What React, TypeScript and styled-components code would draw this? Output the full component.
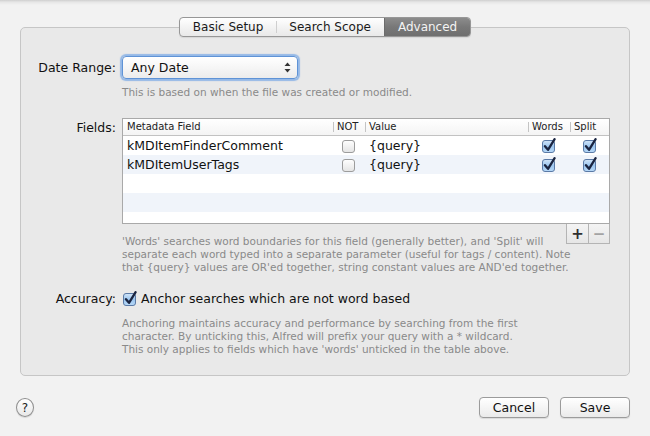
import React from 'react'
import styled, { createGlobalStyle } from 'styled-components'

const Global = createGlobalStyle`
  html, body {
    margin: 0;
    padding: 0;
    background: #f2f2f2;
  }
  body {
    font-family: "DejaVu Sans", "Liberation Sans", sans-serif;
    color: #111;
  }
`

const Window = styled.div`
  width: 650px;
  height: 436px;
  box-sizing: border-box;
  padding: 17px 20px 0 20px;
  display: flex;
  flex-direction: column;
  background: linear-gradient(#cfcfcf 0px, #e6e6e6 2px, #f2f2f2 5px, #f2f2f2 100%);
  overflow: hidden;
`

const TabBar = styled.div`
  display: flex;
  justify-content: center;
  position: relative;
  z-index: 1;
`

const Segments = styled.div`
  display: flex;
  height: 20px;
  box-sizing: border-box;
  border: 1px solid #979797;
  border-radius: 4px;
  overflow: hidden;
  background: linear-gradient(#ffffff, #f1f1f1 60%, #e9e9e9);
  box-shadow: 0 1px 1px rgba(0, 0, 0, 0.08);
`

const Tab = styled.div<{ $active?: boolean; $divider?: boolean }>`
  display: flex;
  align-items: center;
  justify-content: center;
  padding: 0 13px;
  font-size: 12px;
  color: ${p => (p.$active ? '#f4f4f4' : '#1a1a1a')};
  background: ${p =>
    p.$active
      ? 'linear-gradient(#8c8c8c, #787878 50%, #6f6f6f)'
      : p.$divider
      ? 'linear-gradient(#cfcfcf, #cfcfcf) left center / 1px 12px no-repeat'
      : 'transparent'};
  border-left: ${p => (p.$active ? '1px solid #6c6c6c' : 'none')};
`

const GroupBox = styled.div`
  margin-top: -10px;
  height: 349px;
  box-sizing: border-box;
  border: 1px solid #c6c6c6;
  border-radius: 5px;
  background: #e9e9e9;
  padding: 28px 19px 0 0;
`

const FieldRow = styled.div<{ $gap?: number }>`
  display: grid;
  grid-template-columns: 95px 1fr;
  column-gap: 6px;
  margin-top: ${p => p.$gap ?? 0}px;
`

const Label = styled.div<{ $pad?: number }>`
  text-align: right;
  font-size: 12.5px;
  line-height: 16px;
  padding-top: ${p => p.$pad ?? 0}px;
`

const Popup = styled.div`
  width: 176px;
  height: 23px;
  box-sizing: border-box;
  display: flex;
  align-items: center;
  justify-content: space-between;
  padding: 0 6px 0 8px;
  font-size: 12.5px;
  border: 1px solid #5f93d6;
  border-radius: 4px;
  background: linear-gradient(#ffffff, #f6f6f6 50%, #ececec);
  box-shadow: 0 0 1px 2px rgba(120, 168, 230, 0.75);
`

const Hint = styled.div<{ $gap?: number }>`
  font-size: 10.5px;
  line-height: 13px;
  color: #8a8a8a;
  margin-top: ${p => p.$gap ?? 0}px;
  white-space: nowrap;
`

const Table = styled.div`
  width: 488px;
  box-sizing: border-box;
  border: 1px solid #a9a9a9;
  background: #fff;
`

const Cols = styled.div`
  display: grid;
  grid-template-columns: 210px 32px 1fr 42px 39px;
`

const HeaderRow = styled(Cols)`
  height: 16px;
  border-bottom: 1px solid #c2c2c2;
  background: linear-gradient(#ffffff, #f4f4f4);
`

const HeadCell = styled.div<{ $sep?: boolean }>`
  font-size: 10px;
  line-height: 16px;
  color: #222;
  padding-left: 4px;
  background: ${p =>
    p.$sep ? 'linear-gradient(#c4c4c4, #c4c4c4) left center / 1px 10px no-repeat' : 'none'};
  white-space: nowrap;
  overflow: hidden;
`

const Body = styled.div`
  height: 87px;
  overflow: hidden;
`

const DataRow = styled(Cols)<{ $alt?: boolean }>`
  height: 19px;
  align-items: center;
  background: ${p => (p.$alt ? '#f0f4fa' : '#ffffff')};
`

const Cell = styled.div<{ $center?: boolean }>`
  font-size: 12.5px;
  line-height: 19px;
  padding-left: ${p => (p.$center ? 0 : 4)}px;
  display: flex;
  align-items: center;
  justify-content: ${p => (p.$center ? 'center' : 'flex-start')};
  white-space: nowrap;
`

const Below = styled.div`
  display: grid;
  grid-template-columns: 1fr auto;
  width: 488px;
`

const Note = styled(Hint)`
  grid-area: 1 / 1 / 2 / 3;
  padding-top: 11px;
`

const PlusMinus = styled.div`
  grid-area: 1 / 2 / 2 / 3;
  align-self: start;
  display: flex;
  height: 20px;
  box-sizing: border-box;
  border: 1px solid #b4b4b4;
  border-top: none;
  background: linear-gradient(#f4f4f4, #e6e6e6);
`

const PMButton = styled.div<{ $disabled?: boolean }>`
  width: 21px;
  display: flex;
  align-items: center;
  justify-content: center;
  font-size: 15px;
  font-weight: bold;
  color: ${p => (p.$disabled ? '#a3a3a3' : '#2f2f2f')};
  & + & {
    border-left: 1px solid #b4b4b4;
    width: 20px;
  }
`

const CheckLine = styled.div`
  display: flex;
  align-items: center;
  gap: 3px;
  font-size: 12.5px;
  line-height: 16px;
`

const BottomBar = styled.div`
  display: flex;
  align-items: center;
  margin-top: 21px;
  margin-left: -4px;
  height: 21px;
`

const HelpButton = styled.div`
  width: 18px;
  height: 19px;
  box-sizing: border-box;
  border-radius: 50%;
  border: 1px solid #8e8e8e;
  background: linear-gradient(#ffffff, #e8e8e8);
  box-shadow: 0 1px 1px rgba(0, 0, 0, 0.12);
  display: flex;
  align-items: center;
  justify-content: center;
  font-size: 12px;
  color: #222;
`

const Spacer = styled.div`
  flex: 1;
`

const PushButton = styled.div`
  width: 70px;
  height: 21px;
  box-sizing: border-box;
  border: 1px solid #9b9b9b;
  border-radius: 4px;
  background: linear-gradient(#ffffff, #f5f5f5 50%, #eaeaea);
  box-shadow: 0 1px 1px rgba(0, 0, 0, 0.1);
  display: flex;
  align-items: center;
  justify-content: center;
  font-size: 12.5px;
  margin-left: 11px;
`

function Checkbox({ checked }: { checked?: boolean }) {
  return (
    <svg width="16" height="16" viewBox="0 0 16 16">
      <defs>
        <linearGradient id="cbOn" x1="0" y1="0" x2="0" y2="1">
          <stop offset="0" stopColor="#d2e5f8" />
          <stop offset="0.5" stopColor="#9cc6ef" />
          <stop offset="1" stopColor="#b7d8f7" />
        </linearGradient>
        <linearGradient id="cbOff" x1="0" y1="0" x2="0" y2="1">
          <stop offset="0" stopColor="#ffffff" />
          <stop offset="1" stopColor="#e4e4e4" />
        </linearGradient>
      </defs>
      <rect
        x="1.5"
        y="2.5"
        width="12"
        height="12"
        rx="2.5"
        fill={checked ? 'url(#cbOn)' : 'url(#cbOff)'}
        stroke={checked ? '#5b7aa6' : '#9c9c9c'}
      />
      {checked && (
        <path
          d="M4 8.2 L7 11.8 L13.6 1.2"
          fill="none"
          stroke="#1a2440"
          strokeWidth="2.3"
          strokeLinecap="round"
          strokeLinejoin="round"
        />
      )}
    </svg>
  )
}

function Stepper() {
  return (
    <svg width="7" height="11" viewBox="0 0 7 11">
      <path d="M3.5 0.5 L6.5 4 L0.5 4 Z" fill="#333" />
      <path d="M3.5 10.5 L6.5 7 L0.5 7 Z" fill="#333" />
    </svg>
  )
}

const fields = [
  { name: 'kMDItemFinderComment', not: false, value: '{query}', words: true, split: true },
  { name: 'kMDItemUserTags', not: false, value: '{query}', words: true, split: true },
]

function App() {
  const rows = [...fields, null, null, null]
  return (
    <Window>
      <Global />
      <TabBar>
        <Segments>
          <Tab>Basic Setup</Tab>
          <Tab $divider>Search Scope</Tab>
          <Tab $active>Advanced</Tab>
        </Segments>
      </TabBar>

      <GroupBox>
        <FieldRow>
          <Label $pad={4}>Date Range:</Label>
          <div>
            <Popup>
              <span>Any Date</span>
              <Stepper />
            </Popup>
            <Hint $gap={7}>This is based on when the file was created or modified.</Hint>
          </div>
        </FieldRow>

        <FieldRow $gap={19}>
          <Label $pad={2}>Fields:</Label>
          <div>
            <Table>
              <HeaderRow>
                <HeadCell>Metadata Field</HeadCell>
                <HeadCell $sep>NOT</HeadCell>
                <HeadCell $sep>Value</HeadCell>
                <HeadCell $sep>Words</HeadCell>
                <HeadCell $sep>Split</HeadCell>
              </HeaderRow>
              <Body>
                {rows.map((r, i) => (
                  <DataRow key={i} $alt={i % 2 === 1}>
                    {r && (
                      <>
                        <Cell>{r.name}</Cell>
                        <Cell $center>
                          <Checkbox checked={r.not} />
                        </Cell>
                        <Cell>{r.value}</Cell>
                        <Cell $center>
                          <Checkbox checked={r.words} />
                        </Cell>
                        <Cell $center>
                          <Checkbox checked={r.split} />
                        </Cell>
                      </>
                    )}
                  </DataRow>
                ))}
              </Body>
            </Table>
            <Below>
              <Note>
                'Words' searches word boundaries for this field (generally better), and 'Split' will
                <br />
                separate each word typed into a separate parameter (useful for tags / content). Note
                <br />
                that {'{query}'} values are OR'ed together, string constant values are AND'ed together.
              </Note>
              <PlusMinus>
                <PMButton>+</PMButton>
                <PMButton $disabled>−</PMButton>
              </PlusMinus>
            </Below>
          </div>
        </FieldRow>

        <FieldRow $gap={17}>
          <Label>Accuracy:</Label>
          <div>
            <CheckLine>
              <Checkbox checked />
              <span>Anchor searches which are not word based</span>
            </CheckLine>
            <Hint $gap={10}>
              Anchoring maintains accuracy and performance by searching from the first
              <br />
              character. By unticking this, Alfred will prefix your query with a * wildcard.
              <br />
              This only applies to fields which have 'words' unticked in the table above.
            </Hint>
          </div>
        </FieldRow>
      </GroupBox>

      <BottomBar>
        <HelpButton>?</HelpButton>
        <Spacer />
        <PushButton>Cancel</PushButton>
        <PushButton>Save</PushButton>
      </BottomBar>
    </Window>
  )
}

export default App
